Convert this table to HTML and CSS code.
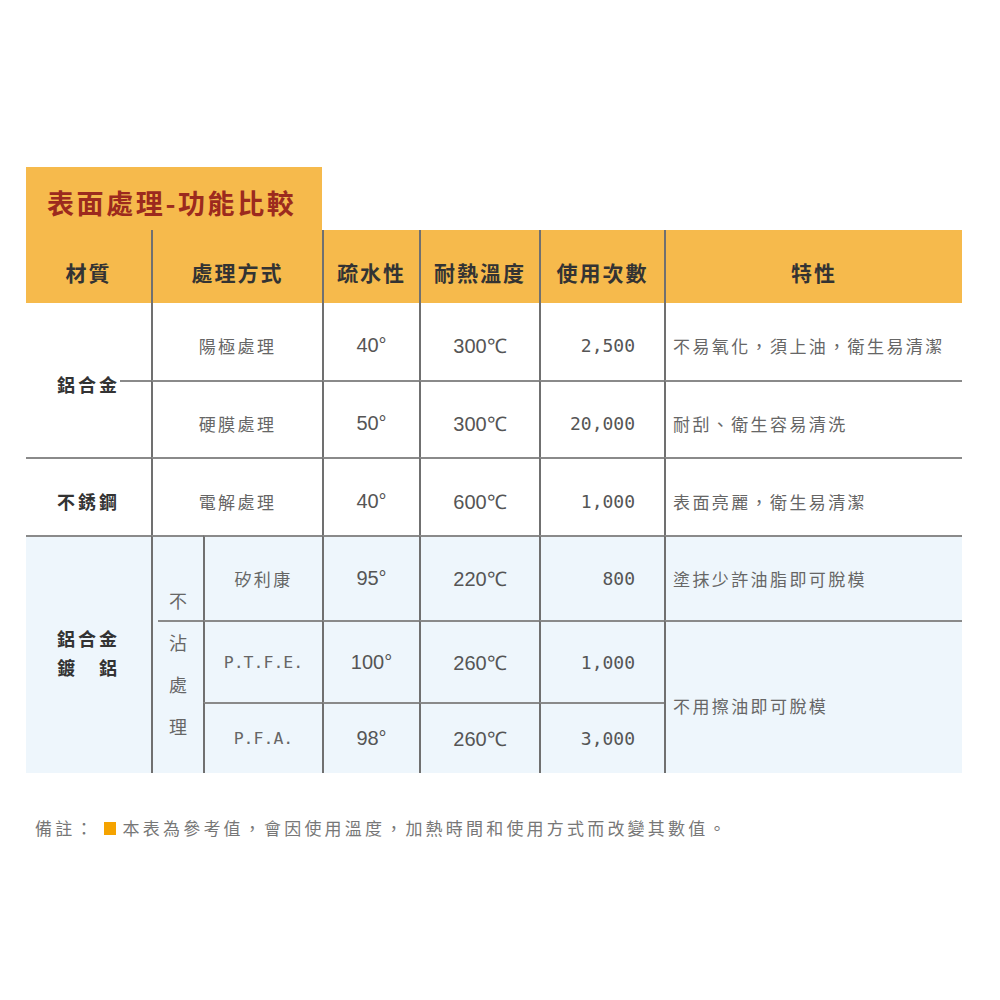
FILE: index.html
```html
<!DOCTYPE html>
<html lang="zh-Hant">
<head>
<meta charset="utf-8">
<title>表面處理-功能比較</title>
<link rel="stylesheet" href="styles.css">
</head>
<body>
<div class="page">
  <div class="title">表面處理-功能比較</div>
  <div class="table">
    <div class="c h">材質</div>
    <div class="c h span2 vl">處理方式</div>
    <div class="c h vl">疏水性</div>
    <div class="c h vl">耐熱溫度</div>
    <div class="c h vl">使用次數</div>
    <div class="c h vl">特性</div>

    <div class="c mat up rspan2 mat-al">鋁合金</div>
    <div class="c up span2 vl txt">陽極處理</div>
    <div class="c up vl num">40°</div>
    <div class="c up vl num">300℃</div>
    <div class="c up vl cnt">2,500</div>
    <div class="c up vl desc">不易氧化，須上油，衛生易清潔</div>

    <div class="c up ht span2 vl txt">硬膜處理</div>
    <div class="c up ht vl num">50°</div>
    <div class="c up ht vl num">300℃</div>
    <div class="c up ht vl cnt">20,000</div>
    <div class="c up ht vl desc">耐刮、衛生容易清洗</div>

    <div class="c mat up ht">不銹鋼</div>
    <div class="c up ht span2 vl txt">電解處理</div>
    <div class="c up ht vl num">40°</div>
    <div class="c up ht vl num">600℃</div>
    <div class="c up ht vl cnt">1,000</div>
    <div class="c up ht vl desc">表面亮麗，衛生易清潔</div>

    <div class="c mat blue ht rspan3 mat-two"><span>鋁合金</span><span>鍍　鋁</span></div>
    <div class="c blue ht vl rspan3 nonstick"><span>不</span><span>沾</span><span>處</span><span>理</span></div>
    <div class="c blue ht vl txt">矽利康</div>
    <div class="c blue ht vl num">95°</div>
    <div class="c blue ht vl num">220℃</div>
    <div class="c blue ht vl cnt">800</div>
    <div class="c blue ht vl desc">塗抹少許油脂即可脫模</div>

    <div class="c blue ht vl code">P.T.F.E.</div>
    <div class="c blue ht vl num">100°</div>
    <div class="c blue ht vl num">260℃</div>
    <div class="c blue ht vl cnt">1,000</div>
    <div class="c blue ht vl desc rspan2 desc-low">不用擦油即可脫模</div>

    <div class="c blue ht vl code">P.F.A.</div>
    <div class="c blue ht vl num">98°</div>
    <div class="c blue ht vl num">260℃</div>
    <div class="c blue ht vl cnt">3,000</div>
  </div>
  <div class="note"><span class="note-label">備註：</span><span class="sq"></span><span>本表為參考值，會因使用溫度，加熱時間和使用方式而改變其數值。</span></div>
</div>
</body>
</html>
```
FILE: styles.css
```css
html, body {
  margin: 0;
  padding: 0;
  background: #ffffff;
}
body {
  font-family: "Noto Sans CJK TC", "Noto Sans", sans-serif;
  color: #555;
}
.page {
  padding: 167px 0 0 26px;
}
.title {
  width: 296px;
  height: 63px;
  box-sizing: border-box;
  background: #f6ba4c;
  color: #9c2a1e;
  font-size: 27px;
  font-weight: 700;
  letter-spacing: 2.6px;
  padding: 8px 0 0 21px;
  display: flex;
  align-items: center;
}
.table {
  display: grid;
  grid-template-columns: 125px 52px 119px 97px 120px 125px 298px;
  grid-template-rows: 73px 77px 77px 78px 85px 82px 71px;
  width: 936px;
}
.c {
  box-sizing: border-box;
  display: flex;
  align-items: center;
  justify-content: center;
  position: relative;
}
.span2 { grid-column: span 2; }
.rspan2 { grid-row: span 2; }
.rspan3 { grid-row: span 3; }
.vl { border-left: 2px solid #707070; }
.ht { border-top: 2px solid #8a8a8a; }
.blue { background: #eef6fc; }
.up { padding-top: 8px; }

.h {
  background: #f6ba4c;
  color: #333;
  font-size: 21px;
  font-weight: 700;
  letter-spacing: 2px;
  padding-top: 10px;
}
.mat {
  color: #333;
  font-size: 18px;
  font-weight: 700;
  letter-spacing: 3px;
}
.mat-al::after {
  content: "";
  position: absolute;
  left: 94px;
  right: 0;
  top: 77px;
  height: 2px;
  background: #8a8a8a;
}
.mat-two {
  flex-direction: column;
  line-height: 29px;
  padding-bottom: 4px;
}
.nonstick {
  flex-direction: column;
  justify-content: flex-start;
  padding-top: 42px;
  font-size: 18px;
  line-height: 42px;
  color: #666;
}
.nonstick::after {
  content: "";
  position: absolute;
  left: 5px;
  right: 0;
  top: 83px;
  height: 2px;
  background: #8a8a8a;
}
.txt {
  font-size: 17px;
  letter-spacing: 2.4px;
  color: #666;
}
.num {
  font-family: "Liberation Sans", Arial, sans-serif;
  font-size: 20px;
  color: #555;
}
.cnt {
  font-family: "DejaVu Sans Mono", "Liberation Mono", monospace;
  font-size: 18px;
  color: #555;
  justify-content: flex-end;
  padding-right: 29px;
}
.code {
  font-family: "DejaVu Sans Mono", "Liberation Mono", monospace;
  font-size: 16.5px;
  color: #666;
}
.desc {
  justify-content: flex-start;
  padding-left: 7px;
  font-size: 17px;
  letter-spacing: 2.4px;
  color: #666;
}
.desc-low {
  padding-top: 16px;
}
.note {
  display: flex;
  align-items: center;
  margin-top: 43px;
  padding-left: 9px;
  font-size: 17px;
  letter-spacing: 3.2px;
  color: #777;
  line-height: 24px;
}
.sq {
  width: 12px;
  height: 13px;
  background: #f5a300;
  margin: 0 7px 0 8px;
}
```
